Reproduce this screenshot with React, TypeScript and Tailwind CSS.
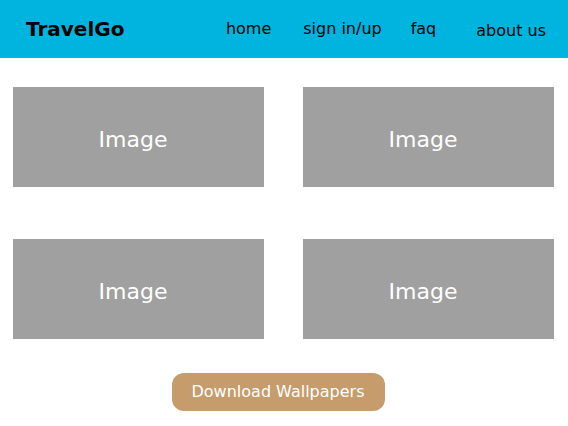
const font = { fontFamily: '"DejaVu Sans", sans-serif' };

function ImageBox() {
  return (
    <div className="flex h-[100px] items-center justify-center bg-[#a0a0a0] pr-[11px] pt-[4px] text-[22px] text-white">
      Image
    </div>
  );
}

export default function App() {
  return (
    <div className="min-h-[426px] w-[568px] bg-white" style={font}>
      <header className="flex h-[58px] items-center bg-[#00b4e0] text-black">
        <h1 className="ml-[26px] text-[20px] font-bold">TravelGo</h1>
        <nav className="ml-auto flex items-center text-[16px]">
          <a className="ml-0">home</a>
          <a className="ml-[32px]">sign in/up</a>
          <a className="ml-[29px]">faq</a>
          <a className="ml-[40px] mr-[22px] mt-[3px]">about us</a>
        </nav>
      </header>
      <main className="px-[13px] pt-[29px]">
        <div className="grid grid-cols-[251px_251px] gap-x-[39px] gap-y-[52px]">
          <ImageBox />
          <ImageBox />
          <ImageBox />
          <ImageBox />
        </div>
        <div className="mt-[34px] flex justify-center">
          <button className="ml-[-12px] h-[38px] w-[213px] rounded-[12px] bg-[#c69c6d] text-[16px] text-white">
            Download Wallpapers
          </button>
        </div>
      </main>
    </div>
  );
}
